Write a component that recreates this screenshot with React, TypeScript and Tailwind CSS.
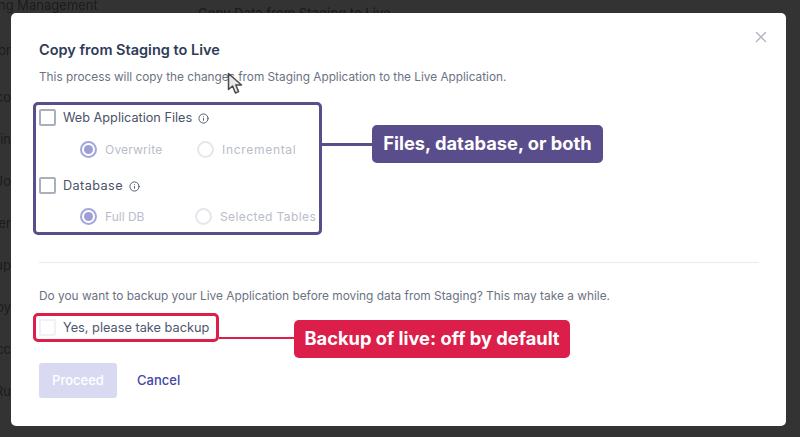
import React from 'react';
import { Info, X } from 'lucide-react';

const sidebarItems = ['or', 'co', 'ain', 'Jo', 'er', 'up', 'oy', 'cc', 'Ru'];

function Checkbox({ light }: { light?: boolean }) {
  return (
    <span
      className={`block w-[17px] h-[17px] rounded-[2px] border-2 shrink-0 bg-white ${
        light ? 'border-[#f0f1f4]' : 'border-[#a9afbb]'
      }`}
    />
  );
}

function Radio({
  label,
  checked,
  boxClass,
  textClass,
}: {
  label: string;
  checked?: boolean;
  boxClass: string;
  textClass: string;
}) {
  return (
    <div className={`flex items-center gap-2 ${boxClass}`}>
      <span
        className={`flex items-center justify-center w-[17px] h-[17px] rounded-full border-2 shrink-0 ${
          checked ? 'border-[#a5a6dc]' : 'border-[#e6e7ec]'
        }`}
      >
        {checked && <span className="block w-[9px] h-[9px] rounded-full bg-[#9c9dd9]" />}
      </span>
      <span className={`text-[12px] leading-[17px] text-[#b9bdc9] whitespace-nowrap ${textClass}`}>{label}</span>
    </div>
  );
}

function CheckRow({ label, textClass }: { label: string; textClass: string }) {
  return (
    <div className="flex items-center">
      <Checkbox />
      <span className={`ml-[7px] text-[12.7px] leading-[17px] text-[#4a5169] whitespace-nowrap ${textClass}`}>
        {label}
      </span>
      <Info size={11} strokeWidth={2} className="ml-[6px] mt-px text-[#4a5169]" />
    </div>
  );
}

function Cursor() {
  return (
    <svg className="absolute left-[216px] top-[59px]" width="17" height="24" viewBox="0 0 17 24">
      <path
        d="M1.5 1.5 L1.5 17.5 L5.6 14 L8.4 21 L11.6 19.6 L8.8 13 L14.5 13 Z"
        fill="#e8e8e8"
        stroke="#4a4a4a"
        strokeWidth="1.5"
        strokeLinejoin="round"
      />
    </svg>
  );
}

export default function App() {
  return (
    <div
      className="relative w-[800px] h-[437px] overflow-hidden bg-[#333333]"
      style={{ fontFamily: '"Inter", "Open Sans", sans-serif' }}
    >
      {/* page behind the modal */}
      <div className="blur-[0.6px] text-[#1c1c1c] text-[13px]">
        <div className="flex items-start">
          <span className="ml-[-2px] leading-[14px] mt-[-2px] w-[200px] whitespace-nowrap">ng Management</span>
          <span className="mt-[6px] leading-[14px] whitespace-nowrap font-medium">Copy Data from Staging to Live</span>
        </div>
        <div className="mt-[23px] flex flex-col items-end w-[11px] gap-[27px]">
          {sidebarItems.map((item, i) => (
            <span key={item} className={`leading-[15px] whitespace-nowrap ${i === 0 ? 'mb-[5px]' : ''}`}>
              {item}
            </span>
          ))}
        </div>
      </div>

      {/* modal */}
      <div className="absolute left-[11px] top-[13px] w-[775px] h-[413px] rounded-[5px] bg-white px-[28px] pt-[28px]">
        <button className="absolute right-[16px] top-[15px] text-[#b3b7c6]">
          <X size={18} strokeWidth={2} />
        </button>
        <Cursor />

        <h2 className="text-[14.5px] leading-[18px] font-semibold text-[#2f3c58]">Copy from Staging to Live</h2>
        <p className="mt-[10px] text-[11.8px] leading-[16px] text-[#6b7283] whitespace-nowrap">
          This process will copy the changes from Staging Application to the Live Application.
        </p>

        <div className="relative mt-[17px] ml-[-6px] w-[289px] h-[133px] rounded-[5px] border-[3px] border-[#5a4d8c] pl-[3px] pt-[4px]">
          <CheckRow label="Web Application Files" textClass="" />
          <div className="flex mt-[15px] ml-[41px]">
            <Radio label="Overwrite" checked boxClass="w-[117px]" textClass="tracking-[0.2px]" />
            <Radio label="Incremental" boxClass="" textClass="tracking-[0.7px]" />
          </div>
          <div className="mt-[19px]">
            <CheckRow label="Database" textClass="tracking-[0.4px]" />
          </div>
          <div className="flex mt-[14px] ml-[41px]">
            <Radio label="Full DB" checked boxClass="w-[115px]" textClass="" />
            <Radio label="Selected Tables" boxClass="" textClass="tracking-[0.4px]" />
          </div>
          {/* callout */}
          <div className="absolute left-[285px] top-[38px] w-[52px] h-[3px] bg-[#5a4d8c]" />
          <div className="absolute left-[336px] top-[20px] flex items-center justify-center w-[231px] h-[38px] rounded-[5px] bg-[#5a4d8c] text-white text-[18.3px] font-bold whitespace-nowrap">
            Files, database, or both
          </div>
        </div>

        <div className="mt-[27px] h-px w-[720px] bg-[#e9eaee]" />

        <p className="mt-[25px] text-[11.87px] leading-[16px] text-[#6b7283] whitespace-nowrap">
          Do you want to backup your Live Application before moving data from Staging? This may take a while.
        </p>

        <div className="relative mt-[9px] ml-[-6px] flex items-center w-[186px] h-[29px] rounded-[5px] border-[3px] border-[#dc1f4a] pl-[3px]">
          <Checkbox light />
          <span className="ml-[7px] text-[12.75px] leading-[17px] text-[#4f566e] whitespace-nowrap">
            Yes, please take backup
          </span>
          {/* callout */}
          <div className="absolute left-[183px] top-[21px] w-[76px] h-[2px] bg-[#dc1f4a]" />
          <div className="absolute left-[258px] top-[4px] flex items-center justify-center w-[276px] h-[38px] rounded-[5px] bg-[#dc1f4a] text-white text-[18.3px] font-bold whitespace-nowrap">
            Backup of live: off by default
          </div>
        </div>

        <div className="mt-[21px] flex items-center">
          <button className="w-[78px] h-[35px] rounded-[3px] bg-[#d9daf2] text-white text-[13px] font-medium">
            Proceed
          </button>
          <button className="ml-[20px] text-[13px] font-medium text-[#4446a6]">Cancel</button>
        </div>
      </div>
    </div>
  );
}
